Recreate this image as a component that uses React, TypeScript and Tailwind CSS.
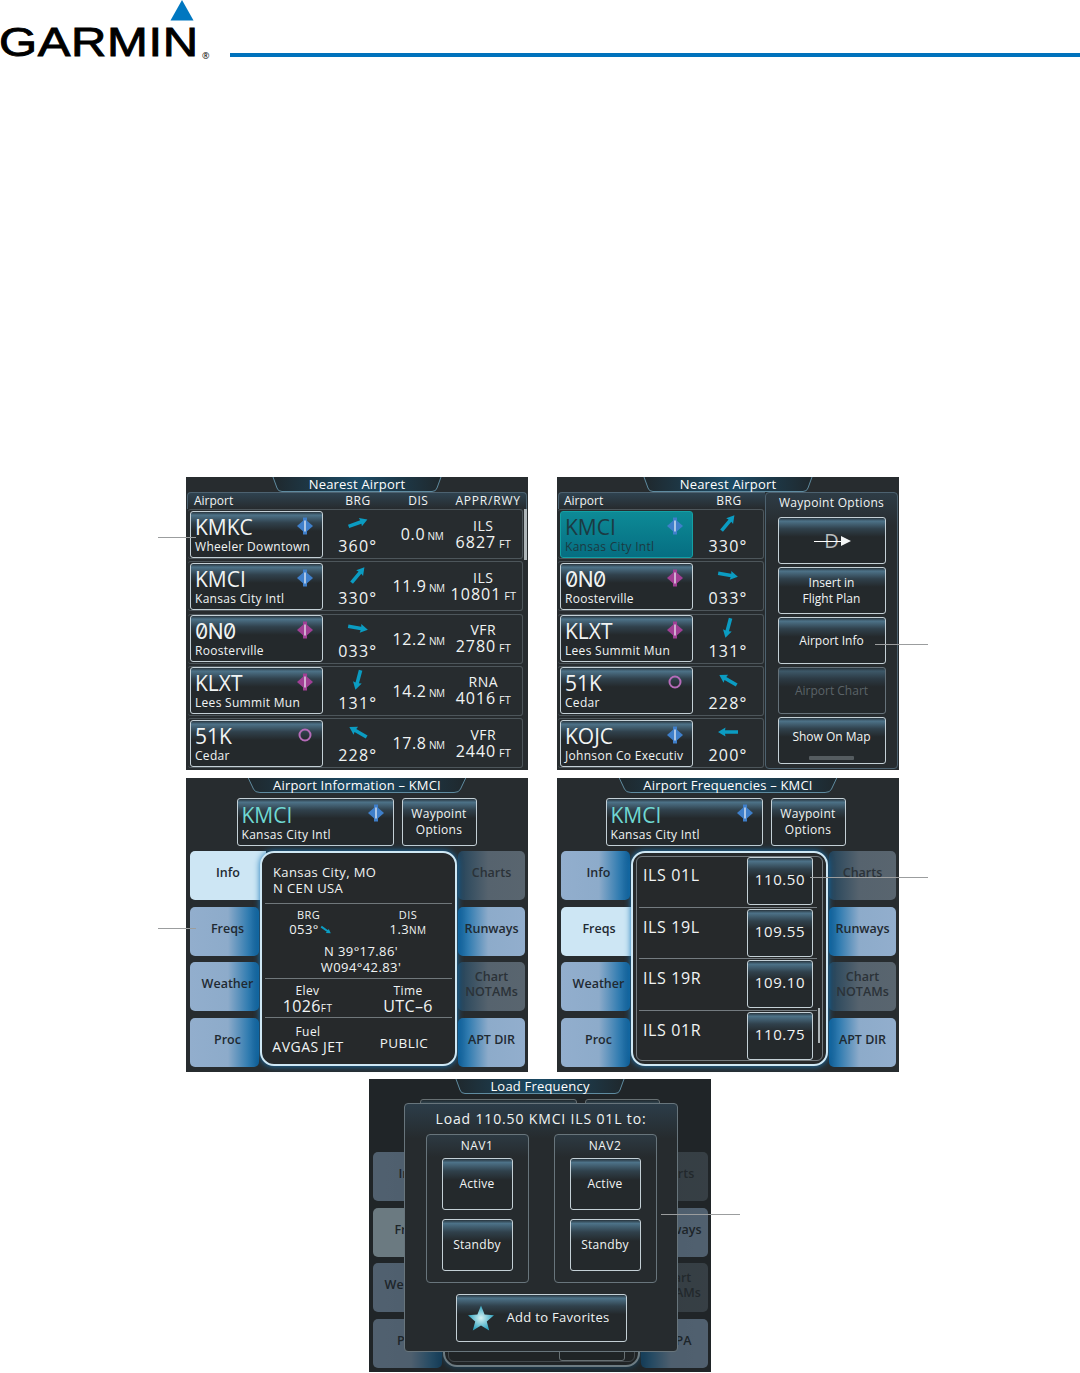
import type { ReactNode } from "react";

const btn =
  "flex shrink-0 rounded-[3px] border border-[#c4d0d6] bg-[linear-gradient(#27343d_0,#4d7288_7%,#30414c_24%,#24292c_42%)]";
const off = "bg-[linear-gradient(90deg,#92aecd_0,#8dabca_55%,#2f7bb0_85%,#0d5c94_100%)]";
const offR = "bg-[linear-gradient(270deg,#92aecd_0,#8dabca_55%,#2f7bb0_85%,#0d5c94_100%)]";
const dim = "bg-[linear-gradient(270deg,#59656f_0,#56636e_55%,#2e4a5e_90%,#1f4058_100%)]";

type Wpt = { id: string; name: string; kind: "blue" | "pink" | "ring"; brg: string; deg: number; dis: string; t1: string; t2: string };

const airports: Wpt[] = [
  { id: "KMKC", name: "Wheeler Downtown", kind: "blue", brg: "360°", deg: 70, dis: "0.0", t1: "ILS", t2: "6827" },
  { id: "KMCI", name: "Kansas City Intl", kind: "blue", brg: "330°", deg: 40, dis: "11.9", t1: "ILS", t2: "10801" },
  { id: "0N0", name: "Roosterville", kind: "pink", brg: "033°", deg: 100, dis: "12.2", t1: "VFR", t2: "2780" },
  { id: "KLXT", name: "Lees Summit Mun", kind: "pink", brg: "131°", deg: 195, dis: "14.2", t1: "RNA", t2: "4016" },
  { id: "51K", name: "Cedar", kind: "ring", brg: "228°", deg: 300, dis: "17.8", t1: "VFR", t2: "2440" },
];
const kojc: Wpt = { id: "KOJC", name: "Johnson Co Executiv", kind: "blue", brg: "200°", deg: 270, dis: "", t1: "", t2: "" };

function Mark({ kind }: { kind: Wpt["kind"] }) {
  if (kind === "ring") {
    return (
      <svg width="18" height="18" viewBox="0 0 18 18">
        <circle cx="9" cy="9" r="5.5" fill="none" stroke="#b56bb8" strokeWidth="2" />
      </svg>
    );
  }
  const c = kind === "blue" ? "#3f7fca" : "#a03f94";
  return (
    <svg width="18" height="18" viewBox="0 0 18 18">
      <path d="M9 2 17 9 9 16 1 9Z" fill={c} />
      <rect x="7" y="0.5" width="4" height="17" fill={c} />
      <rect x="8.4" y="3.5" width="1.2" height="11" fill="#f2f5f8" />
    </svg>
  );
}

function Arrow({ deg, size = 24 }: { deg: number; size?: number }) {
  return (
    <svg width={size} height={size} viewBox="0 0 24 24">
      <g transform={`rotate(${deg} 12 12)`} fill="#0b9cc2">
        <path d="M12 2 16.5 9.5 13.8 9 13.8 22 10.2 22 10.2 9 7.5 9.5Z" />
      </g>
    </svg>
  );
}

function Callout({ className }: { className: string }) {
  return <div className={`absolute z-30 h-px bg-[#9b9d9e] ${className}`} />;
}

function Title({ text, width, bold }: { text: string; width: string; bold?: boolean }) {
  return (
    <div className={`relative mx-auto flex h-[15px] shrink-0 items-center justify-center ${width}`}>
      <svg className="absolute inset-0 h-full w-full" viewBox="0 0 170 15" preserveAspectRatio="none">
        <defs>
          <linearGradient id="tabfill" x1="0" x2="1" y1="0" y2="0">
            <stop offset="0" stopColor="#1f282d" />
            <stop offset="0.5" stopColor="#1b4a64" />
            <stop offset="1" stopColor="#1f282d" />
          </linearGradient>
        </defs>
        <path d="M1 0 5 11Q6 14.5 10 14.5L160 14.5Q164 14.5 165 11L169 0" fill="url(#tabfill)" stroke="#5f8ba0" vectorEffect="non-scaling-stroke" />
      </svg>
      <span className={`relative text-[13px] leading-none tracking-[0.2px] text-white ${bold ? "font-medium" : ""}`}>{text}</span>
    </div>
  );
}

function Ident({ w, className, hi }: { w: Wpt; className: string; hi?: boolean }) {
  const face = w.id === "0N0" ? "font-['Inter',sans-serif] slashed-zero tracking-[-0.5px]" : "";
  return (
    <div className={`${btn} ${className} relative flex-col justify-center pl-[4px]`}>
      <div className={`text-[21px] leading-[25px] ${face} ${hi ? "text-[#6fd8d2]" : ""}`}>{w.id}</div>
      <div className="text-[12px] font-medium leading-[14px] tracking-[0.3px]">{w.name}</div>
      <div className="absolute right-[8px] top-[5px]">
        <Mark kind={w.kind} />
      </div>
    </div>
  );
}

function Brg({ w }: { w: Wpt }) {
  return (
    <div className="flex w-[70px] flex-col items-center">
      <Arrow deg={w.deg} />
      <span className="text-[16px] leading-[22px] tracking-[1.2px]">{w.brg}</span>
    </div>
  );
}

function Row({ w, full }: { w: Wpt; full?: boolean }) {
  return (
    <div className={`flex h-[50px] items-center rounded-[3px] border-y border-r border-[#4d565b] pl-[2px] ${full ? "w-[335px]" : "w-[206px]"}`}>
      <Ident w={w} className="h-[47px] w-[133px]" />
      <Brg w={w} />
      {full && (
        <>
          <div className="w-[52px] pr-[1px] text-right text-[16px] tracking-[0.6px] whitespace-nowrap">
            {w.dis}
            <span className="text-[10px] tracking-[-0.3px]"> NM</span>
          </div>
          <div className="flex w-[78px] flex-col items-center text-[15px] leading-[17px] tracking-[0.5px]">
            <span className="text-[14px]">{w.t1}</span>
            <span className="whitespace-nowrap text-[16px] tracking-[1px]">
              {w.t2}
              <span className="text-[11px] tracking-normal"> FT</span>
            </span>
          </div>
        </>
      )}
    </div>
  );
}

function Panel({ h, children }: { h: string; children: ReactNode }) {
  return <div className={`relative flex w-[342px] shrink-0 flex-col bg-[#272c2f] text-[#f1f4f4] ${h}`}>{children}</div>;
}

function NearestOne() {
  return (
    <Panel h="h-[293px]">
      <Title text="Nearest Airport" width="w-[170px]" />
      <div className="mx-[1px] flex h-[17px] items-center rounded-t-[4px] border-x border-t border-[#4d6270] bg-[linear-gradient(#2f4350,#262b2e)] text-[12px] leading-none">
        <span className="w-[136px] pl-[6px]">Airport</span>
        <span className="w-[69px] text-center tracking-[0.5px]">BRG</span>
        <span className="w-[52px] text-center tracking-[0.5px]">DIS</span>
        <span className="w-[82px] pl-[6px] text-center tracking-[0.8px]">APPR/RWY</span>
      </div>
      <div className="flex gap-[1px] pl-[2px]">
        <div className="flex flex-col gap-[2.25px]">
          {airports.map((a) => (
            <Row key={a.id} w={a} full />
          ))}
        </div>
        <div className="h-[51px] w-[3px] bg-[#aeb5b8]" />
      </div>
      <Callout className="-left-[28px] top-[60px] w-[38px]" />
    </Panel>
  );
}

function NearestTwo() {
  const rows = [airports[1], airports[2], airports[3], airports[4], kojc];
  return (
    <Panel h="h-[293px]">
      <Title text="Nearest Airport" width="w-[170px]" />
      <div className="flex">
        <div className="w-[208px] pl-[1px]">
          <div className="flex h-[17px] items-center rounded-tl-[4px] border-l border-t border-[#4d6270] bg-[linear-gradient(#2f4350,#262b2e)] text-[12px] leading-none">
            <span className="w-[136px] pl-[5px]">Airport</span>
            <span className="w-[68px] text-center tracking-[0.5px]">BRG</span>
          </div>
          <div className="flex flex-col gap-[2.25px]">
            {rows.map((a, i) =>
              i === 0 ? (
                <div key={a.id} className="flex h-[50px] w-[206px] items-center rounded-[3px] border-y border-r border-[#4d565b] pl-[2px]">
                  <div className="relative flex h-[47px] w-[133px] shrink-0 flex-col justify-center rounded-[3px] border border-[#14a0a4] bg-[linear-gradient(#0d8a96,#066e82)] pl-[4px] text-[#1c3a42]">
                    <div className="text-[21px] leading-[25px]">{a.id}</div>
                    <div className="text-[12px] font-medium leading-[14px] tracking-[0.3px]">{a.name}</div>
                    <div className="absolute right-[8px] top-[5px]">
                      <Mark kind="blue" />
                    </div>
                  </div>
                  <Brg w={a} />
                </div>
              ) : (
                <Row key={a.id} w={a} />
              ),
            )}
          </div>
        </div>
        <div className="flex h-[277px] w-[133px] flex-col items-center rounded-[4px] border border-[#4d6270] bg-[linear-gradient(#2e3c46,#272c2f_12%)]">
          <div className="mt-[2px] mb-[6px] text-[12px] leading-[16px] tracking-[0.3px]">Waypoint Options</div>
          <div className="flex flex-col gap-[3px]">
            <div className={`${btn} h-[47px] w-[108px] items-center justify-center pl-[12px]`}>
              <div className="relative flex items-center">
                <span className="text-[20px] font-medium leading-none text-[#b8bcbe]">D</span>
                <span className="absolute -left-[10px] top-[10px] h-[1.5px] w-[28px] bg-white" />
                <svg className="relative ml-[2px]" width="10" height="10" viewBox="0 0 10 10">
                  <path d="M0 0 10 5 0 10Z" fill="#f4f6f6" />
                </svg>
              </div>
            </div>
            <div className={`${btn} h-[47px] w-[108px] items-center justify-center text-center text-[12px] font-medium leading-[16px]`}>
              <span>
                Insert in
                <br />
                Flight Plan
              </span>
            </div>
            <div className={`${btn} h-[47px] w-[108px] items-center justify-center text-[12px] font-medium`}>Airport Info</div>
            <div className="flex h-[47px] w-[108px] shrink-0 items-center justify-center rounded-[3px] border border-[#66727a] bg-[linear-gradient(#27343d_0,#3d5868_7%,#2c3a44_24%,#24292c_42%)] text-[12px] font-medium text-[#5b6368]">
              Airport Chart
            </div>
            <div className={`${btn} relative h-[47px] w-[108px] items-center justify-center pb-[8px] text-[12px] font-medium`}>
              Show On Map
              <span className="absolute bottom-[3px] left-[30px] h-[4px] w-[45px] rounded-[1px] bg-[#555c60]" />
            </div>
          </div>
        </div>
      </div>
      <Callout className="left-[318px] top-[167px] w-[53px]" />
    </Panel>
  );
}

function Tab({ text, state, right }: { text: string; state: "on" | "off" | "dim"; right?: boolean }) {
  const fill = state === "on" ? "bg-[#cde6f4]" : state === "dim" ? dim : right ? offR : off;
  const color = state === "dim" ? "text-[#2b3238]" : "text-[#1f2a32]";
  const size = right ? "w-[67px] pb-[6px]" : state === "on" ? "w-[76px] rounded-r-none pb-[6px]" : "w-[69px] pb-[6px] pl-[6px]";
  return (
    <div className={`flex h-[49px] items-center justify-center rounded-[5px] text-center text-[12.5px] font-semibold leading-[15px] ${fill} ${color} ${size}`}>
      <span>{text}</span>
    </div>
  );
}

function AirportFrame({ title, width, active, last = "APT DIR", ghost, shift, children }: { title: string; width: string; active: string; last?: string; ghost?: boolean; shift?: boolean; children: ReactNode }) {
  return (
    <>
      {title ? <Title text={title} width={width} /> : <div className="h-[15px] shrink-0" />}
      <div className={`mt-[5px] flex justify-center gap-[8px] ${shift ? "pr-[5px]" : "pr-[1px]"}`}>
        {ghost ? <div className={`${btn} h-[48px] w-[157px]`} /> : <Ident w={airports[1]} hi className="h-[48px] w-[157px]" />}
        <div className={`${btn} h-[48px] w-[75px] items-center justify-center text-center text-[12px] leading-[16px] tracking-[0.3px]`}>
          {!ghost && (
            <span>
              Waypoint
              <br />
              Options
            </span>
          )}
        </div>
      </div>
      <div className="mt-[5px] flex pl-[4px]">
        <div className="flex w-[70px] flex-col gap-[6.5px]">
          {["Info", "Freqs", "Weather", "Proc"].map((t) => (
            <Tab key={t} text={t} state={t === active ? "on" : "off"} />
          ))}
        </div>
        <div className="relative z-10 h-[215px] w-[197px] overflow-hidden rounded-[14px] border-2 border-[#cfe8f5] bg-[#26292b] shadow-[0_0_6px_#1a78b8]">
          {children}
        </div>
        <div className="ml-[1px] flex flex-col gap-[6.5px]">
          <Tab text="Charts" state="dim" right />
          <Tab text="Runways" state="off" right />
          <Tab text="Chart NOTAMs" state="dim" right />
          <Tab text={last} state="off" right />
        </div>
      </div>
    </>
  );
}

function InfoBody() {
  const rule = "mx-[3px] h-px bg-[#70777b]";
  return (
    <div className="flex h-full flex-col text-[13px] leading-[16px] tracking-[0.4px]">
      <div className="h-[50px] pt-[11px] pl-[11px]">
        <div>Kansas City, MO</div>
        <div>N CEN USA</div>
      </div>
      <div className={rule} />
      <div className="flex h-[74px] flex-col pt-[3px] text-center text-[12px]">
        <div className="flex">
          <div className="w-[95px] pl-[4px] text-[11px]">
            <div className="pr-[5px] leading-[15px]">BRG</div>
            <div className="flex items-center justify-center text-[13px] leading-[15px]">
              053°
              <Arrow deg={125} size={14} />
            </div>
          </div>
          <div className="ml-[5px] w-[95px] text-[11px]">
            <div className="leading-[15px]">DIS</div>
            <div className="text-[13px] leading-[15px]">
              1.3<span className="text-[10px]">NM</span>
            </div>
          </div>
        </div>
        <div className="mt-[5px] pl-[5px] text-[13px] leading-[16px]">
          N 39°17.86'
          <br />
          W094°42.83'
        </div>
      </div>
      <div className={rule} />
      <div className="flex h-[38px] pt-[4px] text-center">
        <div className="w-[92px]">
          <div className="text-[12px] leading-[15px]">Elev</div>
          <div className="text-[16px] leading-[17px]">
            1026<span className="text-[10px]">FT</span>
          </div>
        </div>
        <div className="ml-[8px] w-[95px]">
          <div className="text-[12px] leading-[15px]">Time</div>
          <div className="text-[16px] leading-[17px]">UTC–6</div>
        </div>
      </div>
      <div className={rule} />
      <div className="flex pt-[6px] text-center">
        <div className="w-[92px]">
          <div className="text-[12px] leading-[15px]">Fuel</div>
          <div className="text-[14px] font-medium leading-[16px] tracking-[0.5px]">AVGAS JET</div>
        </div>
        <div className="ml-[5px] flex w-[90px] items-center justify-center pt-[6px] text-[13.5px] font-medium">PUBLIC</div>
      </div>
    </div>
  );
}

function FreqBody({ ghost }: { ghost?: boolean }) {
  const rows = [
    ["ILS 01L", "110.50"],
    ["ILS 19L", "109.55"],
    ["ILS 19R", "109.10"],
    ["ILS 01R", "110.75"],
  ];
  return (
    <div className="m-[3px] flex h-[205px] gap-[1px] overflow-hidden rounded-[6px] border border-[#747b80] pl-[2px]">
      <div className="flex flex-1 flex-col gap-[1px]">
        {rows.map(([n, f]) => (
          <div key={n} className="flex h-[50.5px] shrink-0 justify-between border-b border-[#747b80] pl-[4px] pr-[4px]">
            <span className="pt-[9px] text-[16px] font-medium leading-[18px] tracking-[0.6px]">{ghost ? "" : n}</span>
            <div className={`${btn} h-[48px] w-[66px] items-center justify-center pb-[3px] text-[15px] tracking-[0.6px]`}>{ghost ? "" : f}</div>
          </div>
        ))}
      </div>
      <div className="flex w-[4px] flex-col justify-end pb-[17px]">
        <div className="h-[35px] w-[2px] bg-[#aeb5b8]" />
      </div>
    </div>
  );
}

function LoadModal() {
  const box = "flex h-[149px] w-[103px] flex-col items-center rounded-[4px] border border-[#68757c] bg-[linear-gradient(#2d3a43,#262b2e_15%)]";
  const b = `${btn} w-[71px] h-[52px] items-center justify-center text-[12px] tracking-[0.3px]`;
  return (
    <div className="absolute left-[35px] top-[24px] z-20 flex h-[249px] w-[274px] flex-col items-center rounded-[4px] border border-[#68757c] bg-[linear-gradient(#2c3d49,#262b2e_14%)]">
      <div className="mt-[6px] text-[14px] leading-[18px] tracking-[0.85px]">Load 110.50 KMCI ILS 01L to:</div>
      <div className="mt-[6px] flex gap-[25px]">
        {["NAV1", "NAV2"].map((n) => (
          <div key={n} className={box}>
            <div className="text-[12px] font-medium leading-[22px] tracking-[0.5px]">{n}</div>
            <div className={`${b} mt-[1px]`}>Active</div>
            <div className={`${b} mt-[9px]`}>Standby</div>
          </div>
        ))}
      </div>
      <div className={`${btn} mt-[11px] h-[48px] w-[171px] items-center pl-[10px] text-[13px] font-medium tracking-[0.3px]`}>
        <svg width="28" height="28" viewBox="0 0 28 28">
          <defs>
            <radialGradient id="star">
              <stop offset="0" stopColor="#d6f2f2" />
              <stop offset="1" stopColor="#2ea3c0" />
            </radialGradient>
          </defs>
          <path d="M14 1.5 17.6 10.6 27 11.2 19.8 17.4 22.2 26.5 14 21.4 5.8 26.5 8.2 17.4 1 11.2 10.4 10.6Z" fill="url(#star)" />
        </svg>
        <span className="ml-[12px]">Add to Favorites</span>
      </div>
    </div>
  );
}

export default function App() {
  return (
    <div className="flex h-[1373px] w-[1080px] flex-col overflow-hidden bg-white font-['Open_Sans',sans-serif]">
      <header className="flex h-[60px] shrink-0 items-start">
        <div className="flex w-[230px] shrink-0 flex-col">
          <svg className="ml-[170px]" width="24" height="21" viewBox="0 0 24 21">
            <path d="M12 0 23.5 20.5H.5Z" fill="#0077c0" />
          </svg>
          <div className="mt-[3px] flex items-end">
            <span className="-ml-[1px] origin-left scale-x-[1.225] font-['Liberation_Sans',sans-serif] text-[40px] leading-[37px] tracking-[0.5px] text-black [-webkit-text-stroke:0.9px_black]">GARMIN</span>
            <span className="ml-[40px] mb-[1px] text-[9px] leading-none text-black">®</span>
          </div>
        </div>
        <div className="mt-[53px] h-[4px] flex-1 bg-[#0072bc]" />
      </header>

      <main className="flex flex-col pl-[186px] pt-[417px]">
        <div className="flex gap-[29px]">
          <NearestOne />
          <NearestTwo />
        </div>
        <div className="mt-[8px] flex gap-[29px]">
          <Panel h="h-[294px]">
            <AirportFrame title="Airport Information – KMCI" width="w-[220px]" active="Info">
              <InfoBody />
            </AirportFrame>
            <Callout className="-left-[28px] top-[150px] w-[38px]" />
          </Panel>
          <Panel h="h-[294px]">
            <AirportFrame title="Airport Frequencies – KMCI" width="w-[220px]" active="Freqs" shift>
              <FreqBody />
            </AirportFrame>
            <Callout className="left-[253px] top-[99px] w-[118px]" />
          </Panel>
        </div>
        <div className="ml-[183px] mt-[7px]">
          <Panel h="h-[293px]">
            <AirportFrame title="" width="w-[170px]" active="Freqs" last="AOPA" ghost>
              <FreqBody ghost />
            </AirportFrame>
            <div className="absolute inset-0 z-[15] bg-[#1c2022]/55" />
            <div className="absolute left-[86px] top-0 z-[16] w-[170px]">
              <Title text="Load Frequency" width="w-[170px]" bold />
            </div>
            <LoadModal />
            <Callout className="left-[292px] top-[135px] w-[79px]" />
          </Panel>
        </div>
      </main>
    </div>
  );
}
